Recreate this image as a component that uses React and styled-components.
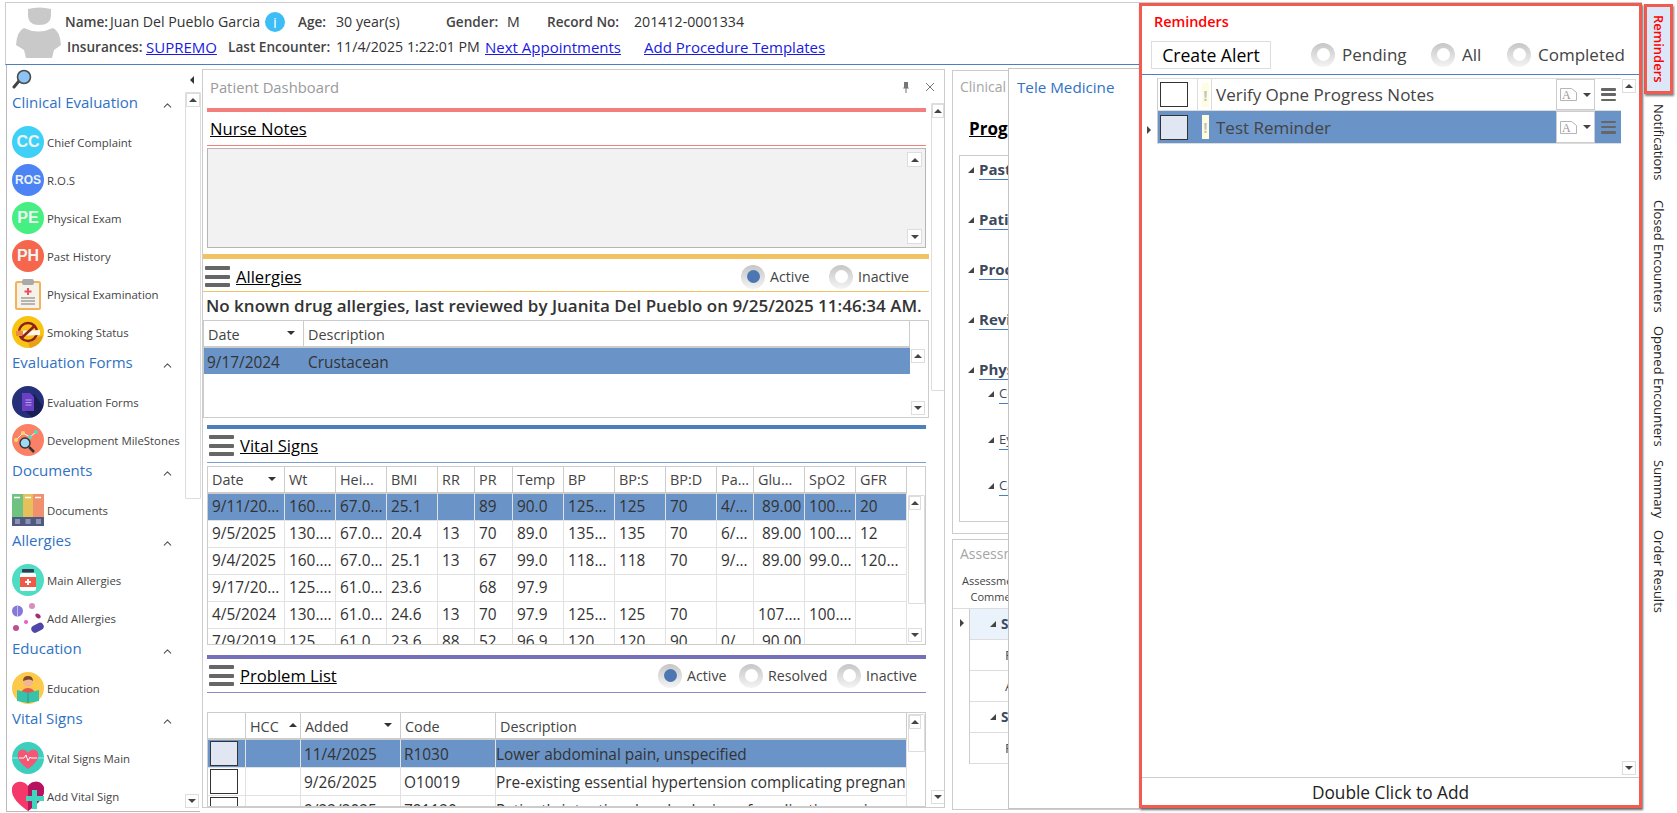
import React from 'react'
import styled, { createGlobalStyle } from 'styled-components'
import { ChevronUp } from 'lucide-react'

const GlobalStyle = createGlobalStyle`
  html, body {
    margin: 0;
    padding: 0;
    background: #fff;
    overflow: hidden;
  }
  * {
    box-sizing: border-box;
  }
`

const Page = styled.div`
  position: relative;
  display: flex;
  width: 1677px;
  height: 813px;
  overflow: hidden;
  background: #fff;
  color: #333;
  font-family: 'Open Sans', 'Liberation Sans', sans-serif;
`

const Main = styled.div`
  width: 1642px;
  display: flex;
  flex-direction: column;
`

/**
 * Patient header
 */
const Header = styled.header`
  height: 63px;
  margin: 2px 0 0 5px;
  padding-left: 10px;
  display: flex;
  align-items: flex-start;
  border-top: 1px solid #ccc;
  border-bottom: 1px solid #4e7fbd;
  border-left: 1px solid #ccc;
`

const Avatar = styled.svg`
  width: 45px;
  height: 51px;
  margin-top: 4px;
  flex: none;
`

const HeaderLines = styled.div`
  margin-left: 4px;
  padding-top: 6px;
  font-size: 14.2px;
`

const HeaderLine = styled.div`
  display: flex;
  align-items: center;
  height: 25px;
  padding-left: ${p => p.$indent || 0}px;
  white-space: nowrap;
`

const Field = styled.span`
  width: ${p => p.$w}px;
  flex: none;
  font-size: ${p => (p.$label ? 13.6 : 14.2)}px;
  font-weight: ${p => (p.$label ? 600 : 400)};
  color: ${p => (p.$label ? '#444' : '#333')};
`

const HeaderLink = styled.a`
  width: ${p => p.$w}px;
  flex: none;
  color: #1a1ae0;
  font-size: 15px;
  text-decoration: underline;
`

const InfoBadge = styled.span`
  width: 20px;
  height: 20px;
  flex: none;
  margin-right: 13px;
  border-radius: 50%;
  background: #3cbdf5;
  color: #fff;
  font-size: 15px;
  line-height: 20px;
  text-align: center;
`

/**
 * Work area
 */
const Body = styled.div`
  flex: 1;
  display: flex;
  padding-left: 6px;
  min-height: 0;
`

const Nav = styled.nav`
  width: 194px;
  height: 747px;
  flex: none;
  display: flex;
  border-left: 1px solid #bbb;
  border-bottom: 1px solid #bbb;
`

const NavList = styled.div`
  width: 177px;
  flex: none;
  padding-left: 5px;
  overflow: hidden;
`

const SearchRow = styled.div`
  height: 26px;
  padding-top: 4px;
`

const NavHeading = styled.div`
  height: 32px;
  display: flex;
  justify-content: space-between;
  color: #2f72c4;
  font-size: 15px;
  line-height: 22px;
  white-space: nowrap;
  svg {
    margin: 8px 10px 0 0;
    color: #555;
  }
`

const NavItem = styled.div`
  height: 38px;
  display: flex;
  align-items: center;
  gap: 3px;
  font-size: 11.4px;
  color: #444;
  white-space: nowrap;
`

const CircleIcon = styled.span`
  width: 32px;
  height: 32px;
  flex: none;
  border-radius: 50%;
  background: ${p => p.$bg};
  color: #eef4f4;
  font-family: 'Liberation Sans', sans-serif;
  font-weight: 700;
  font-size: ${p => p.$size}px;
  line-height: 32px;
  text-align: center;
`

const NavRail = styled.div`
  width: 16px;
  flex: none;
  margin-left: 1px;
  display: flex;
  flex-direction: column;
`

const CollapseArrow = styled.div`
  height: 27px;
  padding: 11px 0 0 5px;
  &::before {
    content: '';
    display: block;
    width: 0;
    height: 0;
    border-top: 4px solid transparent;
    border-bottom: 4px solid transparent;
    border-right: 4px solid #333;
  }
`

const Track = styled.div`
  height: ${p => p.$h}px;
  border: 1px solid #ddd;
  border-radius: 1px;
`

const Spacer = styled.div`
  flex: 1;
`

const BottomGap = styled.div`
  height: 3px;
  flex: none;
`

const ScrollBtn = styled.div`
  width: ${p => p.$w || 14}px;
  height: ${p => p.$h || 14}px;
  flex: none;
  display: flex;
  align-items: center;
  justify-content: center;
  border: 1px solid #ddd;
  background: #fff;
  &::before {
    content: '';
    width: 0;
    height: 0;
    border-left: 4px solid transparent;
    border-right: 4px solid transparent;
    border-${p => (p.$down ? 'top' : 'bottom')}: 4px solid #444;
  }
`

/**
 * Patient dashboard
 */
const Dashboard = styled.section`
  width: 743px;
  height: 739px;
  flex: none;
  margin: 4px 0 0 2px;
  border: 1px solid #ccc;
  display: flex;
  flex-direction: column;
  overflow: hidden;
`

const PanelTitle = styled.div`
  height: 38px;
  flex: none;
  display: flex;
  align-items: center;
  justify-content: space-between;
  padding: 0 9px 4px 7px;
  color: #9a9a9a;
  font-size: 14.8px;
`

const PanelActions = styled.div`
  display: flex;
  align-items: center;
  gap: 15px;
  color: #777;
  svg {
    display: block;
  }
`

const DashBody = styled.div`
  flex: 1;
  display: flex;
  min-height: 0;
`

const DashContent = styled.div`
  width: 726px;
  flex: none;
  overflow: hidden;
`

const DashScroll = styled.div`
  width: 14px;
  margin: -5px 0 0 2px;
  display: flex;
  flex-direction: column;
`

const Bar = styled.div`
  height: ${p => p.$h || 4}px;
  margin: ${p => p.$top || 0}px ${p => (p.$wide ? 0 : 3)}px 0 ${p => (p.$wide ? 0 : 4)}px;
  background: ${p => p.$color};
`

const SectionHead = styled.div`
  height: ${p => p.$h || 34}px;
  margin: 0 ${p => (p.$wide ? 0 : 3)}px 0 ${p => (p.$wide ? 0 : 4)}px;
  padding: ${p => p.$pt || 0}px ${p => p.$right || 0}px 0 ${p => p.$left || 2}px;
  display: flex;
  align-items: center;
  gap: 6px;
  border-bottom: 1px solid ${p => p.$color};
`

const SectionTitle = styled.a`
  color: #000;
  font-size: 16.6px;
  text-decoration: underline;
  flex: 1;
`

const Burger = styled.span`
  width: 25px;
  height: 21px;
  flex: none;
  display: flex;
  flex-direction: column;
  justify-content: space-between;
  i {
    display: block;
    height: 4px;
    background: ${p => p.$color || '#666'};
    border-radius: 1px;
  }
`

const RadioGroup = styled.div`
  display: flex;
  align-items: center;
`

const RadioRing = styled.span`
  width: 24px;
  height: 24px;
  flex: none;
  display: flex;
  align-items: center;
  justify-content: center;
  border-radius: 50%;
  background: linear-gradient(#c6c6c6, #f4f4f4);
  &::before {
    content: '';
    width: 13px;
    height: 13px;
    border-radius: 50%;
    background: ${p => (p.$on ? '#4d77b3' : '#fff')};
  }
`

const RadioLabel = styled.span`
  width: ${p => p.$w}px;
  padding-left: ${p => p.$pad || 5}px;
  flex: none;
  color: #444;
  font-size: ${p => p.$size || 14.2}px;
  white-space: nowrap;
`

const NoteBox = styled.div`
  height: 100px;
  margin: 2px 3px 0 4px;
  padding: 3px 3px 3px 0;
  display: flex;
  flex-direction: column;
  align-items: flex-end;
  justify-content: space-between;
  background: #f2f2f2;
  border: 1px solid #b5b5b5;
`

const AllergyNote = styled.div`
  height: 28px;
  padding-left: 3px;
  color: #333;
  font-size: 17px;
  font-weight: 600;
  line-height: 28px;
  white-space: nowrap;
`

const GridFrame = styled.div`
  height: ${p => p.$h}px;
  margin: ${p => p.$top || 0}px ${p => (p.$wide ? 0 : 3)}px 0 ${p => (p.$wide ? 0 : 4)}px;
  display: flex;
  border: 1px solid #ccc;
  overflow: hidden;
`

const GridBody = styled.div`
  width: ${p => p.$w}px;
  flex: none;
  overflow: hidden;
`

const GridScroll = styled.div`
  flex: 1;
  min-height: 0;
  padding: ${p => p.$top}px 0 2px 1px;
  display: flex;
  flex-direction: column;
  justify-content: space-between;
`

const GridRow = styled.div`
  display: grid;
  grid-template-columns: ${p => p.$cols};
  height: ${p => p.$h}px;
  background: ${p => (p.$on ? '#6a93c7' : 'transparent')};
  border-bottom: ${p => (p.$head ? '2px solid #ccc' : p.$plain ? 'none' : '1px solid #e2e2e2')};
`

const GridCell = styled.div`
  position: relative;
  padding-left: ${p => p.$pad ?? 4}px;
  overflow: hidden;
  white-space: pre;
  color: ${p => (p.$head ? '#444' : '#333')};
  font-size: ${p => (p.$head ? 14.4 : 15.4)}px;
  line-height: ${p => p.$line - 1}px;
  border-right: 1px solid ${p => (p.$head ? '#ccc' : p.$plain ? 'transparent' : '#e2e2e2')};
`

const SortArrow = styled.span`
  position: absolute;
  right: ${p => p.$right || 8}px;
  top: 10px;
  width: 0;
  height: 0;
  border-left: 4px solid transparent;
  border-right: 4px solid transparent;
  border-${p => (p.$up ? 'bottom' : 'top')}: 4px solid #333;
`

const CheckBox = styled.span`
  display: block;
  width: 28px;
  height: 25px;
  margin: 1px 0 0 1px;
  border: 1px solid #333;
  background: ${p => (p.$on ? '#e0e7f3' : '#fff')};
`

/**
 * Clinical column, mostly covered by the overlays
 */
const ClinicalColumn = styled.div`
  width: 187px;
  flex: none;
  margin: 5px 0 0 7px;
  display: flex;
  flex-direction: column;
  gap: 5px;
`

const ClinicalPanel = styled.section`
  height: ${p => p.$h}px;
  flex: none;
  border: 1px solid #ccc;
  overflow: hidden;
  white-space: nowrap;
`

const GreyTitle = styled.div`
  padding: ${p => p.$top || 6}px 0 0 7px;
  height: 32px;
  color: #a5a5a5;
  font-size: 14px;
`

const ProgTitle = styled.a`
  display: block;
  margin: 14px 0 15px 16px;
  color: #000;
  font-size: 17px;
  font-weight: 700;
  text-decoration: underline;
`

const TreeBox = styled.div`
  height: 367px;
  margin-left: 6px;
  padding-top: 3px;
  border: 1px solid #ccc;
`

const TreeRow = styled.div`
  height: ${p => p.$h || 50}px;
  display: flex;
  align-items: flex-start;
  padding-left: ${p => (p.$child ? 28 : 8)}px;
`

const TreeArrow = styled.span`
  width: 0;
  height: 0;
  margin: 8px 5px 0 0;
  border-left: 6px solid transparent;
  border-bottom: 6px solid #444;
`

const GroupArrow = styled(TreeArrow)`
  margin: 0;
`

const TreeLabel = styled.div`
  width: 200px;
  border-bottom: 1px solid #4e7fbd;
  color: #3c4a5c;
  font-size: ${p => (p.$child ? 13 : 15)}px;
  font-weight: ${p => (p.$child ? 400 : 700)};
  line-height: 20px;
`

const AssessHead = styled.div`
  height: 37px;
  padding: 1px 0 0 9px;
  color: #444;
  font-size: 11px;
  line-height: 16px;
  border-bottom: 1px solid #ddd;
`

const AssessRows = styled.div`
  display: flex;
`

const AssessGutter = styled.div`
  width: 16px;
  padding: 10px 0 0 7px;
  &::before {
    content: '';
    display: block;
    width: 0;
    height: 0;
    border-top: 4px solid transparent;
    border-bottom: 4px solid transparent;
    border-left: 4px solid #444;
  }
`

const AssessList = styled.div`
  flex: 1;
  border-left: 1px solid #ccc;
`

const AssessRow = styled.div`
  height: 31px;
  padding-left: ${p => (p.$group ? 20 : 35)}px;
  display: flex;
  align-items: center;
  gap: 5px;
  background: ${p => (p.$on ? '#eaf2fb' : 'transparent')};
  border-bottom: 1px solid #ddd;
  color: #3c4a5c;
  font-size: 13.5px;
  font-weight: ${p => (p.$group ? 700 : 400)};
`

const TeleMedicine = styled.aside`
  position: absolute;
  left: 1008px;
  top: 68px;
  width: 132px;
  height: 741px;
  padding: 8px 0 0 8px;
  background: #fff;
  border: 1px solid #c4c4c4;
  border-right: none;
  color: #2f72c4;
  font-size: 15.2px;
`

/**
 * Reminders flyout
 */
const Reminders = styled.aside`
  position: absolute;
  left: 1139px;
  top: 3px;
  width: 503px;
  height: 805px;
  display: flex;
  flex-direction: column;
  background: #fff;
  border: 3px solid #f15b50;
  box-shadow: 1px 2px 2px rgba(0, 0, 0, 0.6);
`

const RemindersTitle = styled.div`
  height: 35px;
  flex: none;
  padding: 6px 0 0 12px;
  color: #f00;
  font-size: 14.4px;
  font-weight: 600;
`

const AlertBar = styled.div`
  height: 34px;
  flex: none;
  margin: 0;
  padding: 0 0 6px 9px;
  display: flex;
  align-items: center;
  border-bottom: 1px solid #4e7fbd;
`

const CreateAlert = styled.button`
  width: 120px;
  height: 28px;
  margin-right: 40px;
  padding: 0;
  background: #fff;
  border: 1px solid #ddd;
  color: #000;
  font-family: inherit;
  font-size: 17.6px;
`

const ReminderList = styled.div`
  flex: 1;
  min-height: 0;
  display: flex;
  padding-top: 3px;
`

const RowMarkers = styled.div`
  width: 15px;
  flex: none;
  padding: 48px 0 0 5px;
  &::before {
    content: '';
    display: block;
    width: 0;
    height: 0;
    border-top: 4px solid transparent;
    border-bottom: 4px solid transparent;
    border-left: 4px solid #444;
  }
`

const ReminderRows = styled.div`
  width: 464px;
  flex: none;
`

const ReminderRow = styled.div`
  height: 33px;
  display: flex;
  align-items: center;
  background: ${p => (p.$on ? '#6a93c7' : '#fff')};
  border-top: ${p => (p.$on ? 'none' : '1px solid #ddd')};
  border-bottom: 1px solid #ddd;
  border-left: 1px solid #ccc;
`

const ReminderCheck = styled.span`
  width: 28px;
  height: 25px;
  flex: none;
  margin: 0 9px 0 2px;
  border: 1px solid #333;
  background: ${p => (p.$on ? '#e0e7f3' : '#fff')};
`

const Flag = styled.span`
  width: 15px;
  height: 100%;
  flex: none;
  display: flex;
  align-items: center;
  padding-left: 4px;
  border-left: 1px solid ${p => (p.$on ? 'transparent' : '#ddd')};
  border-right: 1px solid ${p => (p.$on ? 'transparent' : '#ddd')};
  &::before {
    content: '!';
    width: 7px;
    height: 24px;
    background: #fffde0;
    color: #c4c4c4;
    font-size: 15px;
    font-weight: 700;
    line-height: 24px;
    text-align: center;
  }
`

const ReminderText = styled.span`
  flex: 1;
  padding-left: 4px;
  color: #444;
  font-size: 17px;
  white-space: nowrap;
`

const PriorityPick = styled.span`
  width: 39px;
  height: 100%;
  flex: none;
  display: flex;
  align-items: center;
  padding-left: 3px;
  background: #fff;
  border: 1px solid #ccc;
  svg {
    display: block;
  }
  &::after {
    content: '';
    margin-left: 6px;
    width: 0;
    height: 0;
    border-left: 4px solid transparent;
    border-right: 4px solid transparent;
    border-top: 4px solid #444;
  }
`

const RowMenu = styled.span`
  width: 26px;
  flex: none;
  padding-left: 6px;
`

const ThinBurger = styled(Burger)`
  width: 15px;
  height: 13px;
  i {
    height: 2.5px;
  }
`

const ReminderScroll = styled.div`
  flex: 1;
  padding: 1px 0 2px 1px;
  display: flex;
  flex-direction: column;
  justify-content: space-between;
`

const ReminderFooter = styled.div`
  height: 28px;
  flex: none;
  border-top: 1px solid #ccc;
  color: #222;
  font-size: 17.3px;
  line-height: 29px;
  text-align: center;
`

/**
 * Right side tabs
 */
const TabRail = styled.div`
  width: 35px;
  flex: none;
  padding: 4px 0 0 2px;
  display: flex;
  flex-direction: column;
  align-items: flex-start;
`

const RailTab = styled.div`
  writing-mode: vertical-rl;
  width: 29px;
  margin-top: ${p => p.$gap}px;
  height: ${p => p.$h}px;
  display: flex;
  align-items: center;
  color: #222;
  font-size: 13px;
  white-space: nowrap;
`

const ActiveTab = styled(RailTab)`
  justify-content: center;
  color: #f00;
  font-weight: 600;
  background: #dce8f7;
  border: 3px solid #f15b50;
  box-shadow: 1px 2px 2px rgba(0, 0, 0, 0.5);
`

const MagnifierIcon = () => (
  <svg width="20" height="20" viewBox="0 0 20 20">
    <path d="M7 12 L2 18" stroke="#444" strokeWidth="3" strokeLinecap="round" />
    <circle cx="12" cy="8" r="6.5" fill="#8cc4f5" stroke="#4a4a4a" strokeWidth="1.6" />
  </svg>
)

const ClipboardIcon = () => (
  <svg width="32" height="32" viewBox="0 0 32 32">
    <rect x="4" y="4" width="24" height="27" rx="1.5" fill="#f5f2ea" stroke="#f5b158" strokeWidth="2" />
    <rect x="10" y="1" width="12" height="6" rx="2" fill="#aaa" />
    <path d="M16 10v7M12.5 13.5h7" stroke="#e8505b" strokeWidth="2" />
    <path d="M9 20h14M9 23h14M9 26h14" stroke="#777" strokeWidth="1.2" />
  </svg>
)

const SmokingIcon = () => (
  <svg width="32" height="32" viewBox="0 0 32 32">
    <circle cx="16" cy="16" r="16" fill="#f9c314" />
    <path d="M16 26 L31 19 A16 16 0 0 1 18 32Z" fill="#e89f1a" />
    <circle cx="16" cy="16" r="9" fill="none" stroke="#8c1f1f" strokeWidth="2.4" />
    <path d="M4 15 L28 14 V19 L4 20Z" fill="#fbf7ea" />
    <path d="M4 15 L11 14.7 V19.7 L4 20Z" fill="#ee8a3a" />
    <path d="M9.5 22 L22.5 10" stroke="#8c1f1f" strokeWidth="2.4" />
  </svg>
)

const FormsIcon = () => (
  <svg width="32" height="32" viewBox="0 0 32 32">
    <circle cx="16" cy="16" r="16" fill="#26307a" />
    <path d="M22 8 L31 20 A16 16 0 0 1 20 31.5 L10 22Z" fill="#181f55" />
    <path d="M10 7h8l4 4v14H10z" fill="#6a3fc4" />
    <path d="M13.5 14h6M13.5 16.5h6M13.5 19h6" stroke="#b9a3ea" strokeWidth="1" />
  </svg>
)

const MilestoneIcon = () => (
  <svg width="32" height="32" viewBox="0 0 32 32">
    <circle cx="16" cy="16" r="16" fill="#fa8166" />
    <path d="M4 16 L11 9 L18 13 L24 8" fill="none" stroke="#fff" strokeWidth="1" />
    <circle cx="4" cy="16" r="2" fill="#f9d56e" />
    <circle cx="11" cy="9" r="2" fill="#f9d56e" />
    <circle cx="18" cy="13" r="2" fill="#4edcc3" />
    <circle cx="24" cy="8" r="2" fill="#4edcc3" />
    <path d="M17 23 L22 28" stroke="#333" strokeWidth="2.5" />
    <circle cx="13" cy="19" r="5" fill="#9fd8f5" stroke="#333" strokeWidth="1.4" />
  </svg>
)

const BindersIcon = () => (
  <svg width="32" height="32" viewBox="0 0 32 32">
    <rect width="11" height="23" fill="#6fc27f" />
    <rect x="11" width="10" height="23" fill="#e6c15a" />
    <rect x="21" width="11" height="23" fill="#f0906e" />
    <rect y="23" width="32" height="9" fill="#50597f" />
    <path d="M2 3.5h6M13 3.5h6M23 3.5h6" stroke="#fff" strokeWidth="1.5" />
    <path d="M3 25h5v5H3zM13.5 25h5v5h-5zM24 25h5v5h-5z" fill="#8b93b5" />
  </svg>
)

const BottleIcon = () => (
  <svg width="32" height="32" viewBox="0 0 32 32">
    <circle cx="16" cy="16" r="16" fill="#4edcc3" />
    <rect x="10" y="5" width="12" height="3.5" rx="1" fill="#2d3f56" />
    <rect x="8" y="9" width="16" height="18" rx="2" fill="#fff" />
    <rect x="8" y="13" width="16" height="10" fill="#ee5a47" />
    <path d="M16 15v6M13 18h6" stroke="#fff" strokeWidth="2" />
  </svg>
)

const PillsIcon = () => (
  <svg width="32" height="32" viewBox="0 0 32 32">
    <circle cx="5.5" cy="9" r="5.5" fill="#8478d8" />
    <path d="M5.5 3.5v11" stroke="#c2bcef" strokeWidth="1" />
    <circle cx="20" cy="4" r="3" fill="#d78dc0" />
    <ellipse cx="26" cy="14" rx="3" ry="2" transform="rotate(35 26 14)" fill="#a52b72" />
    <circle cx="14" cy="20" r="2" fill="#ea5cc0" />
    <circle cx="4" cy="26" r="3" fill="#c04e8e" />
    <rect x="19" y="22" width="13" height="7.5" rx="3.75" transform="rotate(-28 25.5 25.75)" fill="#4e46a8" />
  </svg>
)

const ReaderIcon = () => (
  <svg width="32" height="32" viewBox="0 0 32 32">
    <circle cx="16" cy="16" r="16" fill="#fcc94a" />
    <path d="M8 28 Q8 16 16 16 Q24 16 24 28Z" fill="#e05a4e" />
    <circle cx="16" cy="10" r="5" fill="#f3b592" />
    <path d="M11 9 Q11 4 16 4 Q21 4 21 9 Q18 6 11 9Z" fill="#7a4a2a" />
    <path d="M5 18 L16 21 L27 18 V29 L16 31 L5 29Z" fill="#37c2ac" />
    <path d="M16 21v10" stroke="#1f9c8a" strokeWidth="1" />
  </svg>
)

const HeartMonitorIcon = () => (
  <svg width="32" height="32" viewBox="0 0 32 32">
    <circle cx="16" cy="16" r="16" fill="#3dcfbd" />
    <path d="M0 16h32" stroke="#9deee2" strokeWidth="1" />
    <path d="M16 27 C6 20 5 15 6 11 C8 6 14 7 16 11 C18 7 24 6 26 11 C27 15 26 20 16 27Z" fill="#f25775" />
    <path d="M7 16h5l2-3 2 6 2-4 1 1h6" fill="none" stroke="#fff" strokeWidth="1" />
  </svg>
)

const HeartPlusIcon = () => (
  <svg width="32" height="32" viewBox="0 0 32 32">
    <path d="M16 31 C3 22 -1 15 0 8 C2 0 12 0 16 6 C20 0 30 0 32 8 C33 15 29 22 16 31Z" fill="#f5386a" />
    <path d="M16 6 C20 0 30 0 32 8 C33 15 29 22 16 31Z" fill="#b5135f" />
    <path d="M20 10h5v6h7v5h-7v8h-5v-8h-6v-5h6z" fill="#3fd6c0" />
  </svg>
)

const PriorityIcon = () => (
  <svg width="17" height="13" viewBox="0 0 17 13">
    <path d="M.5.5h11l5 4v8H.5z" fill="#fff" stroke="#b5b5b5" />
    <text x="2" y="11" fontFamily="Liberation Serif, serif" fontSize="12" fill="#999">A</text>
  </svg>
)

const PinIcon = () => (
  <svg width="8" height="11" viewBox="0 0 8 11">
    <path d="M2 0h4v5l1 1.5H1L2 5zM3.5 6.5h1V11h-1z" fill="#777" />
  </svg>
)

const CloseIcon = () => (
  <svg width="10" height="10" viewBox="0 0 10 10">
    <path d="M1 1l8 8M9 1l-8 8" stroke="#777" strokeWidth="1" />
  </svg>
)

const navSections = [
  {
    title: 'Clinical Evaluation',
    items: [
      { label: 'Chief Complaint', icon: <CircleIcon $bg="#3fd0f8" $size={16}>CC</CircleIcon> },
      { label: 'R.O.S', icon: <CircleIcon $bg="#4d84f5" $size={12}>ROS</CircleIcon> },
      { label: 'Physical Exam', icon: <CircleIcon $bg="#46ef82" $size={16}>PE</CircleIcon> },
      { label: 'Past History', icon: <CircleIcon $bg="#f5664d" $size={16}>PH</CircleIcon> },
      { label: 'Physical Examination', icon: <ClipboardIcon /> },
      { label: 'Smoking Status', icon: <SmokingIcon /> }
    ]
  },
  {
    title: 'Evaluation Forms',
    items: [
      { label: 'Evaluation Forms', icon: <FormsIcon /> },
      { label: 'Development MileStones', icon: <MilestoneIcon /> }
    ]
  },
  { title: 'Documents', items: [{ label: 'Documents', icon: <BindersIcon /> }] },
  {
    title: 'Allergies',
    items: [
      { label: 'Main Allergies', icon: <BottleIcon /> },
      { label: 'Add Allergies', icon: <PillsIcon /> }
    ]
  },
  { title: 'Education', items: [{ label: 'Education', icon: <ReaderIcon /> }] },
  {
    title: 'Vital Signs',
    items: [
      { label: 'Vital Signs Main', icon: <HeartMonitorIcon /> },
      { label: 'Add Vital Sign', icon: <HeartPlusIcon /> }
    ]
  }
]

const allergyCols = '100px 606px'
const vitalCols = '77px 51px 51px 51px 37px 38px 51px 51px 51px 51px 37px 51px 51px 51px'
const vitalHead = ['Date', 'Wt', 'Hei...', 'BMI', 'RR', 'PR', 'Temp', 'BP', 'BP:S', 'BP:D', 'Pa...', 'Glu...', 'SpO2', 'GFR']
const vitalRows = [
  ['9/11/20...', '160....', '67.0...', '25.1', '', '89', '90.0', '125...', '125', '70', '4/...', ' 89.00', '100....', '20'],
  ['9/5/2025', '130....', '67.0...', '20.4', '13', '70', '89.0', '135...', '135', '70', '6/...', ' 89.00', '100....', '12'],
  ['9/4/2025', '160....', '67.0...', '25.1', '13', '67', '99.0', '118...', '118', '70', '9/...', ' 89.00', '99.0...', '120...'],
  ['9/17/20...', '125....', '61.0...', '23.6', '', '68', '97.9', '', '', '', '', '', '', ''],
  ['4/5/2024', '130....', '61.0...', '24.6', '13', '70', '97.9', '125...', '125', '70', '', '107....', '100....', ''],
  ['7/9/2019', '125', '61.0', '23.6', '88', '52', '96.9', '120', '120', '90', '0/', ' 90.00', '', '']
]

const problemCols = '38px 55px 100px 95px 411px'
const problemRows = [
  ['11/4/2025', 'R1030', 'Lower abdominal pain, unspecified'],
  ['9/26/2025', 'O10019', 'Pre-existing essential hypertension complicating pregnancy'],
  ['9/22/2025', 'Z91120', "Patient's intentional underdosing of medication regimen"]
]

// text sits closer to the column edge in the last two problem columns
const problemPads = [3, 3, 0]

const clinicalTree = [
  { label: 'Past Medical History' },
  { label: 'Patient Education' },
  { label: 'Procedures' },
  { label: 'Review Of Systems' }
]

const railTabs = [
  { label: 'Notifications', gap: 10, h: 78 },
  { label: 'Closed Encounters', gap: 18, h: 113 },
  { label: 'Opened Encounters', gap: 13, h: 121 },
  { label: 'Summary', gap: 13, h: 56 },
  { label: 'Order Results', gap: 14, h: 83 }
]

const Radio = ({ on, label, w, size, pad }) => (
  <>
    <RadioRing $on={on} />
    <RadioLabel $w={w} $size={size} $pad={pad}>{label}</RadioLabel>
  </>
)

const Bars = () => (
  <>
    <i />
    <i />
    <i />
  </>
)

const App = () => (
  <Page>
    <GlobalStyle />
    <Main>
      <Header>
        <Avatar viewBox="0 0 45 51">
          <path d="M12 2 Q23 -1 35 2 V8 Q35 18 23 18 Q12 18 12 8Z" fill="#c9c9c9" />
          <path d="M8 21 Q22 28 37 21 Q44 24 45 38 L38 43 L36 51 H10 L8 43 L0 38 Q1 24 8 21Z" fill="#c9c9c9" />
        </Avatar>
        <HeaderLines>
          <HeaderLine>
            <Field $label $w={45}>Name:</Field>
            <Field $w={155}>Juan Del Pueblo Garcia</Field>
            <InfoBadge>i</InfoBadge>
            <Field $label $w={38}>Age:</Field>
            <Field $w={110}>30 year(s)</Field>
            <Field $label $w={61}>Gender:</Field>
            <Field $w={40}>M</Field>
            <Field $label $w={87}>Record No:</Field>
            <Field $w={120}>201412-0001334</Field>
          </HeaderLine>
          <HeaderLine $indent={2}>
            <Field $label $w={79}>Insurances:</Field>
            <HeaderLink $w={82}>SUPREMO</HeaderLink>
            <Field $label $w={108}>Last Encounter:</Field>
            <Field $w={149}>11/4/2025 1:22:01 PM</Field>
            <HeaderLink $w={159}>Next Appointments</HeaderLink>
            <HeaderLink $w={190}>Add Procedure Templates</HeaderLink>
          </HeaderLine>
        </HeaderLines>
      </Header>
      <Body>
        <Nav>
          <NavList>
            <SearchRow>
              <MagnifierIcon />
            </SearchRow>
            {navSections.map(section => (
              <div key={section.title}>
                <NavHeading>
                  {section.title}
                  <ChevronUp size={13} />
                </NavHeading>
                {section.items.map(item => (
                  <NavItem key={item.label}>
                    {item.icon}
                    {item.label}
                  </NavItem>
                ))}
              </div>
            ))}
          </NavList>
          <NavRail>
            <CollapseArrow />
            <Track $h={407}>
              <ScrollBtn $w={14} />
            </Track>
            <Spacer />
            <ScrollBtn $down $h={14} />
            <BottomGap />
          </NavRail>
        </Nav>
        <Dashboard>
          <PanelTitle>
            Patient Dashboard
            <PanelActions>
              <PinIcon />
              <CloseIcon />
            </PanelActions>
          </PanelTitle>
          <DashBody>
            <DashContent>
              <Bar $color="#f27f7b" />
              <SectionHead $color="#f27f7b" $left={3}>
                <SectionTitle>Nurse Notes</SectionTitle>
              </SectionHead>
              <NoteBox>
                <ScrollBtn $w={15} $h={15} />
                <ScrollBtn $down $w={15} $h={15} />
              </NoteBox>
              <Bar $wide $color="#f0c463" $h={5} $top={6} />
              <SectionHead $wide $h={33} $pt={3} $color="#f0c463" $right={19}>
                <Burger><Bars /></Burger>
                <SectionTitle>Allergies</SectionTitle>
                <RadioGroup>
                  <Radio on label="Active" w={64} />
                  <Radio label="Inactive" w={57} />
                </RadioGroup>
              </SectionHead>
              <AllergyNote>No known drug allergies, last reviewed by Juanita Del Pueblo on 9/25/2025 11:46:34 AM.</AllergyNote>
              <GridFrame $wide $h={98}>
                <GridBody $w={706}>
                  <GridRow $head $h={27} $cols={allergyCols}>
                    <GridCell $head $line={29}>Date<SortArrow /></GridCell>
                    <GridCell $head $line={29}>Description</GridCell>
                  </GridRow>
                  <GridRow $on $plain $h={26} $cols={allergyCols}>
                    <GridCell $plain $pad={3} $line={30}>9/17/2024</GridCell>
                    <GridCell $plain $line={30}>Crustacean</GridCell>
                  </GridRow>
                </GridBody>
                <GridScroll $top={28}>
                  <ScrollBtn />
                  <ScrollBtn $down />
                </GridScroll>
              </GridFrame>
              <Bar $color="#4e7fbd" $top={7} />
              <SectionHead $color="#7e9fd0" $h={34} $left={2}>
                <Burger><Bars /></Burger>
                <SectionTitle>Vital Signs</SectionTitle>
              </SectionHead>
              <GridFrame $h={179} $top={3}>
                <GridBody $w={699}>
                  <GridRow $head $h={27} $cols={vitalCols}>
                    {vitalHead.map((label, i) => (
                      <GridCell $head $line={27} key={label}>
                        {label}
                        {i === 0 ? <SortArrow /> : null}
                      </GridCell>
                    ))}
                  </GridRow>
                  {vitalRows.map((row, r) => (
                    <GridRow $on={r === 0} $h={27} $cols={vitalCols} key={row[0]}>
                      {row.map((value, c) => (
                        <GridCell $line={27} key={c}>{value}</GridCell>
                      ))}
                    </GridRow>
                  ))}
                </GridBody>
                <GridScroll $top={28}>
                  <Track $h={109}>
                    <ScrollBtn $w={12} />
                  </Track>
                  <ScrollBtn $down />
                </GridScroll>
              </GridFrame>
              <Bar $color="#7570b8" $top={10} />
              <SectionHead $color="#8d89c7" $h={34} $left={2} $right={7}>
                <Burger><Bars /></Burger>
                <SectionTitle>Problem List</SectionTitle>
                <RadioGroup>
                  <Radio on label="Active" w={57} />
                  <Radio label="Resolved" w={74} />
                  <Radio label="Inactive" w={58} />
                </RadioGroup>
              </SectionHead>
              <GridFrame $h={95} $top={19}>
                <GridBody $w={699}>
                  <GridRow $head $h={27} $cols={problemCols}>
                    <GridCell $head $line={29} />
                    <GridCell $head $line={29}>HCC<SortArrow $up $right={3} /></GridCell>
                    <GridCell $head $line={29}>Added<SortArrow /></GridCell>
                    <GridCell $head $line={29}>Code</GridCell>
                    <GridCell $head $line={29}>Description</GridCell>
                  </GridRow>
                  {problemRows.map((row, r) => (
                    <GridRow $on={r === 0} $h={28} $cols={problemCols} key={row[1]}>
                      <GridCell $line={28} $pad={1}><CheckBox $on={r === 0} /></GridCell>
                      <GridCell $line={28} />
                      {row.map((value, c) => (
                        <GridCell $line={30} $pad={problemPads[c]} key={value}>{value}</GridCell>
                      ))}
                    </GridRow>
                  ))}
                </GridBody>
                <GridScroll $top={1}>
                  <Track $h={38}>
                    <ScrollBtn $w={12} />
                  </Track>
                </GridScroll>
              </GridFrame>
            </DashContent>
            <DashScroll>
              <Track $h={288}>
                <ScrollBtn $w={12} />
              </Track>
              <Spacer />
              <ScrollBtn $down />
              <BottomGap />
            </DashScroll>
          </DashBody>
        </Dashboard>
        <ClinicalColumn>
          <ClinicalPanel $h={464}>
            <GreyTitle>Clinical</GreyTitle>
            <ProgTitle>Progress Notes</ProgTitle>
            <TreeBox>
              {clinicalTree.map(node => (
                <TreeRow key={node.label}>
                  <TreeArrow />
                  <TreeLabel>{node.label}</TreeLabel>
                </TreeRow>
              ))}
              <TreeRow $h={24}>
                <TreeArrow />
                <TreeLabel>Physical Exam</TreeLabel>
              </TreeRow>
              <TreeRow $child $h={46}>
                <TreeArrow />
                <TreeLabel $child>Constitutional</TreeLabel>
              </TreeRow>
              <TreeRow $child $h={46}>
                <TreeArrow />
                <TreeLabel $child>Eyes</TreeLabel>
              </TreeRow>
              <TreeRow $child $h={46}>
                <TreeArrow />
                <TreeLabel $child>Cardiovascular</TreeLabel>
              </TreeRow>
            </TreeBox>
          </ClinicalPanel>
          <ClinicalPanel $h={271}>
            <GreyTitle $top={4}>Assessment</GreyTitle>
            <AssessHead>
              Assessment
              <br />
              &nbsp;&nbsp;&nbsp;Comment
            </AssessHead>
            <AssessRows>
              <AssessGutter />
              <AssessList>
                <AssessRow $group $on><GroupArrow />Summary</AssessRow>
                <AssessRow>Plan</AssessRow>
                <AssessRow>Assessment</AssessRow>
                <AssessRow $group><GroupArrow />Summary</AssessRow>
                <AssessRow>Plan</AssessRow>
              </AssessList>
            </AssessRows>
          </ClinicalPanel>
        </ClinicalColumn>
      </Body>
    </Main>
    <TabRail>
      <ActiveTab $gap={0} $h={90}>Reminders</ActiveTab>
      {railTabs.map(tab => (
        <RailTab $gap={tab.gap} $h={tab.h} key={tab.label}>{tab.label}</RailTab>
      ))}
    </TabRail>
    <TeleMedicine>Tele Medicine</TeleMedicine>
    <Reminders>
      <RemindersTitle>Reminders</RemindersTitle>
      <AlertBar>
        <CreateAlert>Create Alert</CreateAlert>
        <Radio label="Pending" w={96} size={17} pad={7} />
        <Radio label="All" w={52} size={17} pad={7} />
        <Radio label="Completed" w={100} size={17} pad={7} />
      </AlertBar>
      <ReminderList>
        <RowMarkers />
        <ReminderRows>
          <ReminderRow>
            <ReminderCheck />
            <Flag />
            <ReminderText>Verify Opne Progress Notes</ReminderText>
            <PriorityPick><PriorityIcon /></PriorityPick>
            <RowMenu><ThinBurger><Bars /></ThinBurger></RowMenu>
          </ReminderRow>
          <ReminderRow $on>
            <ReminderCheck $on />
            <Flag $on />
            <ReminderText>Test Reminder</ReminderText>
            <PriorityPick><PriorityIcon /></PriorityPick>
            <RowMenu><ThinBurger><Bars /></ThinBurger></RowMenu>
          </ReminderRow>
        </ReminderRows>
        <ReminderScroll>
          <ScrollBtn />
          <ScrollBtn $down />
        </ReminderScroll>
      </ReminderList>
      <ReminderFooter>Double Click to Add</ReminderFooter>
    </Reminders>
  </Page>
)

export default App
